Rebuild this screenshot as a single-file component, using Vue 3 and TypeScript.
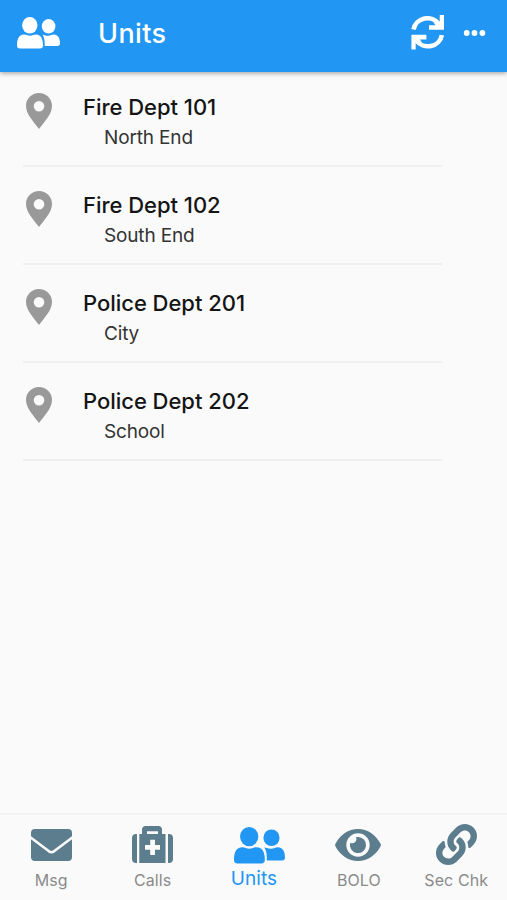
<script setup lang="ts">
interface Unit {
  name: string
  area: string
}

interface Tab {
  id: 'msg' | 'calls' | 'units' | 'bolo' | 'sec'
  label: string
}

const units: Unit[] = [
  { name: 'Fire Dept 101', area: 'North End' },
  { name: 'Fire Dept 102', area: 'South End' },
  { name: 'Police Dept 201', area: 'City' },
  { name: 'Police Dept 202', area: 'School' },
]

const tabs: Tab[] = [
  { id: 'msg', label: 'Msg' },
  { id: 'calls', label: 'Calls' },
  { id: 'units', label: 'Units' },
  { id: 'bolo', label: 'BOLO' },
  { id: 'sec', label: 'Sec Chk' },
]

const activeTab: Tab['id'] = 'units'
</script>

<template>
  <div class="screen">
    <header class="bar">
      <svg class="bar-people" viewBox="0 0 43 32" preserveAspectRatio="none">
        <ellipse cx="12.800" cy="8.300" rx="7.700" ry="8.300" />
        <ellipse cx="31.600" cy="9.300" rx="6.800" ry="7.200" />
        <path d="M0 28.500C0 21 2.500 17.600 7 17.600c2.500 0 3.500 1.200 6 1.200s3.500-1.200 6-1.200c4.500 0 7 3.400 7 10.900 0 2-1 3-3 3H3c-2 0-3-1-3-3z" />
        <path d="M25.600 17.800c1-.3 2.200 1 5.700 1 2.500 0 3.500-1.200 5.500-1.200 4.200 0 6.200 3.700 6.200 8.700 0 1.700-.8 2.600-2.500 2.600H27.700c0-4-.1-8.200-2.100-11.100z" />
      </svg>
      <h1 class="title">Units</h1>
      <svg class="bar-sync" viewBox="0 0 34 35">
        <path class="arc" d="M2.500 14.500A14.200 13.700 0 0 1 28 9" />
        <path d="M28.700 0H33v14.800H18v-4.600h6.500l-2-3 6.200-.7z" />
        <g transform="rotate(180 16.700 17.300)">
          <path class="arc" d="M2.500 14.500A14.200 13.700 0 0 1 28 9" />
          <path d="M28.700 0H33v14.800H18v-4.600h6.500l-2-3 6.200-.7z" />
        </g>
      </svg>
      <svg class="bar-more" viewBox="0 0 24 6">
        <circle cx="3.700" cy="3" r="2.900" />
        <circle cx="11.500" cy="3" r="2.900" />
        <circle cx="19.400" cy="3" r="2.900" />
      </svg>
    </header>

    <main class="list">
      <article v-for="unit in units" :key="unit.name" class="row">
        <svg class="pin" viewBox="0 0 26 36">
          <path fill-rule="evenodd" d="M13 0C5.800 0 0 5.700 0 12.800 0 21.500 7.500 28.500 13 36c5.500-7.500 13-14.500 13-23.200C26 5.700 20.200 0 13 0zm0 8a5.300 5.300 0 1 1 0 10.600A5.300 5.300 0 0 1 13 8z" />
        </svg>
        <div class="text">
          <h2 class="name">{{ unit.name }}</h2>
          <p class="area">{{ unit.area }}</p>
        </div>
      </article>
    </main>

    <nav class="tabs">
      <a v-for="tab in tabs" :key="tab.id" :class="['tab', tab.id, { active: tab.id === activeTab }]">
        <span class="icon-box">
          <svg v-if="tab.id === 'msg'" width="41" height="32" viewBox="0 0 41 32">
            <rect width="41" height="32" rx="4" />
            <path class="gap" d="M-1 8L18 22.300Q20.500 24 23 22.300L42 8" />
          </svg>
          <svg v-else-if="tab.id === 'calls'" width="41" height="37" viewBox="0 0 41 37">
            <path d="M5 8v29H4c-2.500 0-4-1.500-4-4V12c0-2.500 1.500-4 4-4zM36 8h1c2.500 0 4 1.500 4 4v21c0 2.500-1.500 4-4 4h-1z" />
            <path fill-rule="evenodd" d="M7.300 8H10V3.500C10 1.500 11.500 0 13.500 0h13C28.500 0 30 1.500 30 3.500V8h3.500v29H7.300zM15 5.200V8h11V5.200zM18.200 13.800v5.100H13v4.800h5.200V29H23v-5.300h5v-4.800h-5v-5.100z" />
          </svg>
          <svg v-else-if="tab.id === 'units'" width="51" height="37" viewBox="0 0 43 32" preserveAspectRatio="none">
            <ellipse cx="12.800" cy="8.300" rx="7.700" ry="8.300" />
            <ellipse cx="31.600" cy="9.300" rx="6.800" ry="7.200" />
            <path d="M0 28.500C0 21 2.500 17.600 7 17.600c2.500 0 3.500 1.200 6 1.200s3.500-1.200 6-1.200c4.500 0 7 3.400 7 10.900 0 2-1 3-3 3H3c-2 0-3-1-3-3z" />
            <path d="M25.600 17.800c1-.3 2.200 1 5.700 1 2.500 0 3.500-1.200 5.500-1.200 4.200 0 6.200 3.700 6.200 8.700 0 1.700-.8 2.600-2.500 2.600H27.700c0-4-.1-8.200-2.100-11.100z" />
          </svg>
          <svg v-else-if="tab.id === 'bolo'" width="46" height="32" viewBox="0 0 46 32">
            <path d="M.4 14.800C5 6 13.500 0 23 0s18 6 22.600 14.800c.4.800.4 1.600 0 2.400C41 26 32.500 32 23 32S5 26 .4 17.200c-.4-.8-.4-1.600 0-2.400z" />
            <circle class="eye-white" cx="23" cy="16" r="11.700" />
            <path d="M23 7.900a8.100 8.100 0 1 1-7.800 5.900 4.200 4.200 0 0 0 5.700-5.600c.7-.2 1.400-.3 2.100-.3z" />
          </svg>
          <svg v-else width="41" height="41" viewBox="0 0 512 512">
            <path d="M326.612 185.391c59.747 59.809 58.927 155.698.36 214.590-.11.12-.24.25-.36.37l-67.200 67.200c-59.270 59.270-155.699 59.262-214.960 0-59.270-59.260-59.270-155.700 0-214.960l37.106-37.106c9.840-9.840 26.786-3.300 27.294 10.606.648 17.722 3.826 35.527 9.690 52.721 1.986 5.822.567 12.262-3.783 16.612l-13.087 13.087c-28.026 28.026-28.905 73.660-1.155 101.960 28.024 28.579 74.086 28.749 102.325.51l67.200-67.190c28.191-28.191 28.073-73.757 0-101.830-3.701-3.694-7.429-6.564-10.341-8.569a16.037 16.037 0 0 1-6.947-12.606c-.396-10.567 3.348-21.456 11.698-29.806l21.054-21.055c5.521-5.521 14.182-6.199 20.584-1.731a152.482 152.482 0 0 1 20.522 17.197zM467.547 44.449c-59.261-59.262-155.690-59.270-214.960 0l-67.200 67.200c-.12.12-.25.25-.36.37-58.566 58.892-59.387 154.781.36 214.590a152.454 152.454 0 0 0 20.521 17.196c6.402 4.468 15.064 3.789 20.584-1.731l21.054-21.055c8.350-8.350 12.094-19.239 11.698-29.806a16.037 16.037 0 0 0-6.947-12.606c-2.912-2.005-6.640-4.875-10.341-8.569-28.073-28.073-28.191-73.639 0-101.830l67.200-67.190c28.239-28.239 74.300-28.069 102.325.51 27.750 28.300 26.872 73.934-1.155 101.960l-13.087 13.087c-4.350 4.350-5.769 10.790-3.783 16.612 5.864 17.194 9.042 34.999 9.690 52.721.509 13.906 17.454 20.446 27.294 10.606l37.106-37.106c59.271-59.259 59.271-155.699.001-214.959z" />
          </svg>
        </span>
        <span class="label">{{ tab.label }}</span>
      </a>
    </nav>
  </div>
</template>

<style>
body {
  margin: 0;
  background: #fafafa;
}
</style>

<style scoped>
.screen {
  display: flex;
  flex-direction: column;
  height: 100vh;
  overflow: hidden;
  background: #fafafa;
  font-family: Inter, Roboto, sans-serif;
}

svg {
  display: block;
  flex: none;
  overflow: visible;
}

.bar {
  display: flex;
  align-items: center;
  box-sizing: border-box;
  height: 72px;
  flex: none;
  padding: 0 20px 6px 17px;
  background: #2196f3;
  box-shadow: 0 1px 5px rgba(0, 0, 0, 0.4);
  color: #fff;
  fill: #fff;
}

.bar-people {
  width: 43px;
  height: 32px;
}

.title {
  margin: 2px auto 0 38px;
  font-size: 27px;
  line-height: 32px;
  font-weight: 500;
  letter-spacing: 0.4px;
}

.bar-sync {
  width: 34px;
  height: 35px;
  margin: 0 18px 1px 0;
}

.arc {
  fill: none;
  stroke: #fff;
  stroke-width: 4.6;
}

.bar-more {
  width: 24px;
  height: 6px;
}

.list {
  flex: 1;
  padding: 0 65px 0 23px;
}

.row {
  display: flex;
  box-sizing: border-box;
  height: 98px;
  padding: 24px 0 0 3px;
  border-bottom: 2px solid #efefef;
}

.row:first-child {
  height: 95px;
  padding-top: 21px;
}

.pin {
  width: 26px;
  height: 36px;
  fill: #999;
}

.text {
  margin-left: 31px;
}

.name {
  margin: 0;
  font-size: 22px;
  line-height: 28px;
  font-weight: 500;
  letter-spacing: -0.03px;
  color: #151515;
}

.area {
  margin: 4px 0 0 21px;
  font-size: 19px;
  line-height: 26px;
  letter-spacing: -0.15px;
  color: #333;
}

.tabs {
  display: flex;
  box-sizing: border-box;
  height: 87px;
  flex: none;
  border-top: 2px solid #f4f4f4;
  fill: #5b7d8d;
}

.tab {
  flex: none;
  width: 20%;
  box-sizing: border-box;
  display: flex;
  flex-direction: column;
  align-items: center;
  padding-top: 8px;
  color: #8a8a8a;
}

.icon-box {
  display: flex;
  align-items: center;
  justify-content: center;
  height: 43px;
}

.label {
  font-size: 16px;
  line-height: 24px;
  margin-top: 2px;
  letter-spacing: 0.1px;
  white-space: nowrap;
}

.msg,
.calls,
.units {
  padding-left: 1px;
}

.active {
  color: #2196f3;
  fill: #2196f3;
}

.active .label {
  font-size: 19px;
  margin-top: 1px;
}

.units .icon-box {
  padding: 1px 0 0 11px;
  height: 42px;
}

.bolo {
  padding-left: 8px;
}

.bolo .icon-box {
  padding-right: 2px;
}

.gap {
  fill: none;
  stroke: #fafafa;
  stroke-width: 2.6;
}

.eye-white {
  fill: #fafafa;
}
</style>
